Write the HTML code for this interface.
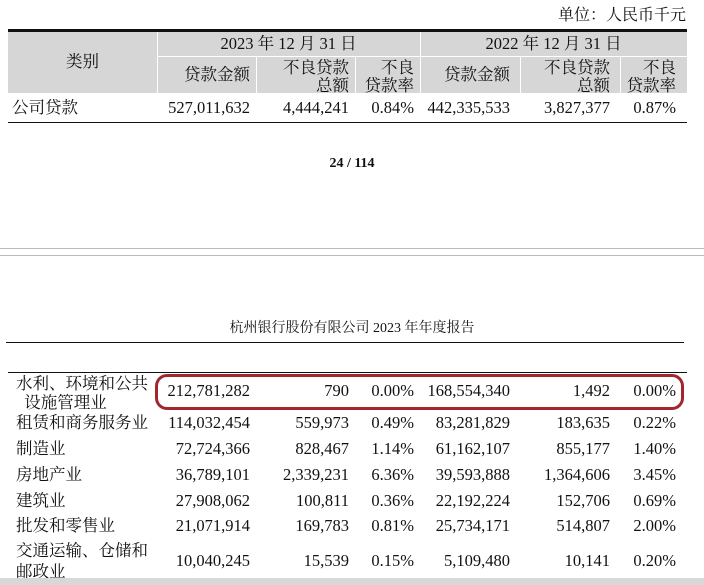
<!DOCTYPE html>
<html><head><meta charset="utf-8"><style>
body{margin:0;width:704px;height:585px;background:#fff;position:relative;overflow:hidden;font-family:"Liberation Serif","Noto Serif CJK SC",serif;color:#111;font-size:16.5px}
.a{position:absolute;white-space:nowrap;line-height:1}
.r{text-align:right}
.c{text-align:center}
.h{position:absolute;height:1px;background:#111}
.v{position:absolute;width:1px;background:#fff}
</style></head><body>
<div class="a" style="right:18px;top:8px;font-size:16px">单位：人民币千元</div>
<div style="position:absolute;left:8px;top:30px;width:679px;height:63px;background:#d6d6d6"></div>
<div class="h" style="left:8px;top:29px;width:679px;height:3px"></div>
<div class="h" style="left:157px;top:56px;width:530px;background:#fff"></div>
<div class="v" style="left:157px;top:32px;height:61px"></div>
<div class="v" style="left:420px;top:32px;height:61px"></div>
<div class="v" style="left:256px;top:57px;height:36px"></div>
<div class="v" style="left:355px;top:57px;height:36px"></div>
<div class="v" style="left:520px;top:57px;height:36px"></div>
<div class="v" style="left:620px;top:57px;height:36px"></div>
<div class="a c" style="left:8px;width:149px;top:54px">类别</div>
<div class="a c" style="left:157px;width:263px;top:36px">2023 年 12 月 31 日</div>
<div class="a c" style="left:420px;width:267px;top:36px">2022 年 12 月 31 日</div>
<div class="a r" style="right:454px;top:67px">贷款金额</div>
<div class="a r" style="right:355px;top:59px;line-height:18px">不良贷款<br>总额</div>
<div class="a r" style="right:290px;top:59px;line-height:18px">不良<br>贷款率</div>
<div class="a r" style="right:194px;top:67px">贷款金额</div>
<div class="a r" style="right:94px;top:59px;line-height:18px">不良贷款<br>总额</div>
<div class="a r" style="right:28px;top:59px;line-height:18px">不良<br>贷款率</div>
<div class="a" style="left:12px;top:100px">公司贷款</div>
<div class="a r" style="right:454px;top:100px">527,011,632</div>
<div class="a r" style="right:355px;top:100px">4,444,241</div>
<div class="a r" style="right:290px;top:100px">0.84%</div>
<div class="a r" style="right:194px;top:100px">442,335,533</div>
<div class="a r" style="right:94px;top:100px">3,827,377</div>
<div class="a r" style="right:28px;top:100px">0.87%</div>
<div class="h" style="left:8px;top:122px;width:679px"></div>
<div class="a c" style="left:0;width:704px;top:157px;font-size:14px;font-weight:bold">24 / 114</div>
<div style="position:absolute;left:0;top:248px;width:704px;height:1px;background:#bbb"></div>
<div style="position:absolute;left:0;top:255px;width:704px;height:1px;background:#bbb"></div>
<div class="a c" style="left:0;width:704px;top:322px;font-size:14px">杭州银行股份有限公司 2023 年年度报告</div>
<div class="h" style="left:6px;top:342px;width:678px"></div>
<div class="h" style="left:8px;top:372px;width:679px"></div>
<div style="position:absolute;left:155px;top:374px;width:523px;height:30px;border:3px solid #a3262f;border-radius:12px"></div>
<div class="a" style="left:16px;top:374px;line-height:19px">水利、环境和公共<br>&nbsp;&nbsp;设施管理业</div>
<div class="a" style="left:16px;top:415px">租赁和商务服务业</div>
<div class="a" style="left:16px;top:441px">制造业</div>
<div class="a" style="left:16px;top:467px">房地产业</div>
<div class="a" style="left:16px;top:493px">建筑业</div>
<div class="a" style="left:16px;top:518px">批发和零售业</div>
<div class="a" style="left:16px;top:540px;line-height:21px">交通运输、仓储和<br>邮政业</div>
<div id="nums"></div>
<div style="position:absolute;left:0;top:578px;width:704px;height:7px;background:#d8d8d8"></div>
<script>
var rows=[[383,"212,781,282","790","0.00%","168,554,340","1,492","0.00%"],
[415,"114,032,454","559,973","0.49%","83,281,829","183,635","0.22%"],
[441,"72,724,366","828,467","1.14%","61,162,107","855,177","1.40%"],
[467,"36,789,101","2,339,231","6.36%","39,593,888","1,364,606","3.45%"],
[493,"27,908,062","100,811","0.36%","22,192,224","152,706","0.69%"],
[518,"21,071,914","169,783","0.81%","25,734,171","514,807","2.00%"],
[553,"10,040,245","15,539","0.15%","5,109,480","10,141","0.20%"]];
var rs=[454,355,290,194,94,28],h="";
rows.forEach(function(r){for(var i=0;i<6;i++)h+='<div class="a r" style="right:'+rs[i]+'px;top:'+r[0]+'px">'+r[i+1]+'</div>';});
document.getElementById("nums").innerHTML=h;
</script>
</body></html>
